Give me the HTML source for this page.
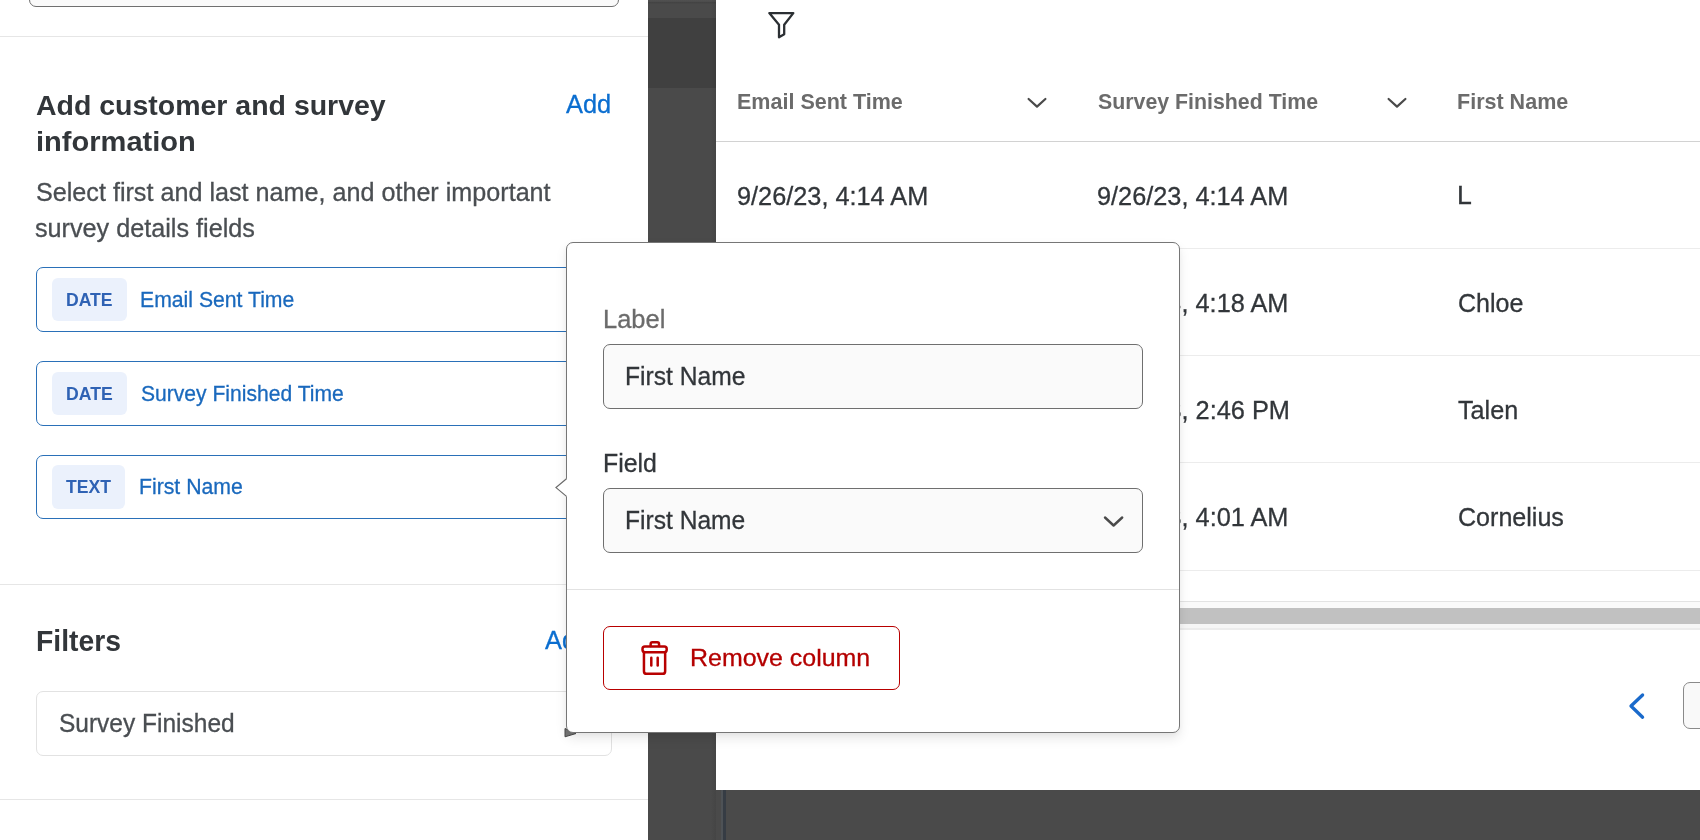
<!DOCTYPE html>
<html>
<head>
<meta charset="utf-8">
<title>Edit column</title>
<style>
  html, body { margin: 0; padding: 0; }
  body {
    width: 1700px; height: 840px; overflow: hidden; position: relative;
    background: #4a4a4a;
    font-family: "Liberation Sans", sans-serif;
    -webkit-font-smoothing: antialiased;
  }
  #wrap { position:absolute; left:0; top:0; width:1700px; height:840px; overflow:hidden; will-change: transform; transform: translateZ(0); }
  .abs { position: absolute; }
  .t { position: absolute; white-space: nowrap; line-height: 1; transform-origin: 0 0; }
/*FIT-START*/
#h1a { left:35.81px; top:90.84px; font-size:28.5px; transform:scaleX(0.9991); }
#h1b { left:36.16px; top:126.89px; font-size:28.5px; transform:scaleX(1.0197); }
#add1 { left:566.31px; top:92.48px; font-size:25px; transform:scaleX(1.0169); }
#p1 { left:36.18px; top:179.62px; font-size:25.3px; transform:scaleX(0.9945); }
#p2 { left:35.09px; top:215.82px; font-size:25.3px; transform:scaleX(0.9960); }
#b1 { left:66.00px; top:291.23px; font-size:18.2px; transform:scaleX(0.9671); }
#b2 { left:65.67px; top:385.20px; font-size:18.2px; transform:scaleX(0.9684); }
#b3 { left:66.23px; top:477.73px; font-size:18.2px; transform:scaleX(0.9666); }
#n1 { left:140.08px; top:289.16px; font-size:22.1px; transform:scaleX(0.9593); }
#n2 { left:141.35px; top:383.41px; font-size:22.1px; transform:scaleX(0.9544); }
#n3 { left:138.61px; top:475.61px; font-size:22.1px; transform:scaleX(0.9606); }
#filt { left:36.47px; top:626.89px; font-size:28.8px; transform:scaleX(0.9832); }
#add2 { left:544.50px; top:628.39px; font-size:25px; transform:scaleX(1.0154); }
#sf { left:58.94px; top:710.54px; font-size:25.6px; transform:scaleX(0.9572); }
#th1 { left:736.89px; top:92.20px; font-size:21.5px; transform:scaleX(1.0008); }
#th2 { left:1097.67px; top:91.68px; font-size:21.5px; transform:scaleX(0.9921); }
#th3 { left:1457.45px; top:91.55px; font-size:21.5px; transform:scaleX(1.0011); }
#r1a { left:737.45px; top:183.84px; font-size:25.6px; transform:scaleX(0.9884); }
#r1b { left:1097.47px; top:183.64px; font-size:25.6px; transform:scaleX(0.9883); }
#r1c { left:1456.54px; top:183.42px; font-size:25.6px; transform:scaleX(1.0417); }
#r2b { left:1097.28px; top:291.05px; font-size:25.6px; transform:scaleX(0.9890); }
#r2c { left:1457.89px; top:290.81px; font-size:25.4px; transform:scaleX(0.9858); }
#r3b { left:1097.36px; top:398.15px; font-size:25.6px; transform:scaleX(0.9900); }
#r3c { left:1458.35px; top:398.23px; font-size:25.4px; transform:scaleX(0.9916); }
#r4b { left:1097.20px; top:505.12px; font-size:25.6px; transform:scaleX(0.9893); }
#r4c { left:1457.65px; top:505.45px; font-size:25.4px; transform:scaleX(0.9869); }
#lab { left:602.54px; top:306.60px; font-size:25.2px; transform:scaleX(1.0112); }
#in1 { left:625.15px; top:363.75px; font-size:25.6px; transform:scaleX(0.9616); }
#fld { left:602.85px; top:451.07px; font-size:25.2px; transform:scaleX(0.9862); }
#in2 { left:625.42px; top:507.51px; font-size:25.6px; transform:scaleX(0.9611); }
#rm { left:690.30px; top:645.77px; font-size:24.1px; transform:scaleX(1.0354); }
/*FIT-END*/

  /* ---------- left panel ---------- */
  #left { left: 0; top: 0; width: 648px; height: 840px; background: #fff; }
  .hr { position: absolute; left: 0; width: 648px; height: 1px; background: #e6e6e6; }
  #topbox { left: 29px; top: -40px; width: 588px; height: 45px; border: 1px solid #707070; border-radius: 7px; background: #fafafa; }

  .h1 { font-weight: bold; color: #32363a; font-size: 26px; }
  .link { color: #0b6ed0; font-size: 24px; }
  .p { color: #4a4e52; font-size: 23.5px; }

  .item { position: absolute; left: 36px; width: 560px; height: 62.5px; border: 1px solid #2a70b8; border-radius: 7px; background: #fff; }
  .badge { position: absolute; left: 15px; top: 9.5px; height: 43.5px; border-radius: 6px; background: #ebf1fc; }
  .td, .p, .f24, .nm, .link, #rm { -webkit-text-stroke: 0.3px currentColor; }
  .bt { font-weight: bold; color: #2f62b4; }
  .nm { color: #1a69bd; }

  #filterbox { left: 36px; top: 691px; width: 574px; height: 63px; border: 1px solid #e2e2e2; border-radius: 7px; background: #fff; }

  /* ---------- dark band ---------- */
  #band { left: 648px; top: 0; width: 68px; height: 840px; background: #4a4a4a; }
  #band2 { left: 648px; top: 18px; width: 68px; height: 70px; background: #404040; }
  #band3 { left: 648px; top: 0; width: 68px; height: 4px; background: linear-gradient(#505050 0, #4e4e4e 35%, #434343 60%, #454545 80%, #4a4a4a 100%); }

  /* ---------- right panel ---------- */
  #right { left: 716px; top: 0; width: 984px; height: 790px; background: #fff; }
  .th { font-weight: bold; color: #6b6b6b; font-size: 20.5px; }
  .td { color: #32363a; font-size: 23.5px; }
  .rl { position: absolute; left: 716px; width: 984px; height: 1px; background: #ececec; }

  /* ---------- popover ---------- */
  #pop { left: 566px; top: 242px; width: 612px; height: 489px; background: #fff; border: 1px solid #767676; border-radius: 7px;
         box-shadow: 0 6px 12px rgba(0,0,0,0.085), 0 2px 5px rgba(0,0,0,0.035); }
  .inp { position: absolute; left: 603px; width: 538px; height: 63px; border: 1px solid #6f6f6f; border-radius: 7px; background: #fafafa; }
  .f24 { font-size: 24.5px; color: #32363a; }
  #btn { left: 603px; top: 626px; width: 295px; height: 62px; border: 1px solid #b80000; border-radius: 7px; background: #fff; }
</style>
</head>
<body>
<div id="wrap">

<!-- LEFT PANEL -->
<div id="left" class="abs"></div>
<div id="topbox" class="abs"></div>
<div class="hr" style="top:36px"></div>
<div class="hr" style="top:584px"></div>
<div class="hr" style="top:799px"></div>

<div class="t h1" id="h1a">Add customer and survey</div>
<div class="t h1" id="h1b">information</div>
<div class="t link" id="add1">Add</div>

<div class="t p" id="p1">Select first and last name, and other important</div>
<div class="t p" id="p2">survey details fields</div>

<div class="item" style="top:267px;"><div class="badge" style="width:75px;"></div></div>
<div class="item" style="top:361px;"><div class="badge" style="width:75px;"></div></div>
<div class="item" style="top:455px; height:62px;"><div class="badge" style="width:73px; top:9.2px;"></div></div>
<div class="t bt" id="b1">DATE</div>
<div class="t bt" id="b2">DATE</div>
<div class="t bt" id="b3">TEXT</div>
<div class="t nm" id="n1">Email Sent Time</div>
<div class="t nm" id="n2">Survey Finished Time</div>
<div class="t nm" id="n3">First Name</div>

<div class="t h1" id="filt">Filters</div>
<div class="t link" id="add2">Add</div>
<div id="filterbox" class="abs"></div>
<div class="t p" id="sf">Survey Finished</div>
<!-- tiny arrow peeking under popover corner -->
<svg class="abs" style="left:560px; top:724px;" width="20" height="16" viewBox="0 0 20 16"><polygon points="5,4.5 16,9.5 5,12.8" fill="#777" stroke="#4a4a4a" stroke-width="1" stroke-linejoin="round"/></svg>

<!-- DARK BAND -->
<div id="band" class="abs"></div>
<div id="band2" class="abs"></div>
<div id="band3" class="abs"></div>
<div class="abs" style="left:711px; top:0; width:5px; height:840px; background:linear-gradient(90deg, rgba(0,0,0,0), rgba(0,0,0,0.07));"></div>

<!-- RIGHT PANEL -->
<div class="abs" style="left:721px; top:790px; width:2px; height:50px; background:#4e5256;"></div>
<div class="abs" style="left:723px; top:790px; width:3px; height:50px; background:#363c44;"></div>
<div id="right" class="abs"></div>
<svg class="abs" style="left:764px; top:8px;" width="36" height="34" viewBox="0 0 36 34">
  <path d="M5.3 5.1 H29.3 L20.2 16.7 V26.2 L15 29.2 V16.7 Z" fill="none" stroke="#2b2f33" stroke-width="2.3" stroke-linejoin="round" stroke-linecap="round"/>
</svg>

<div class="t th" id="th1">Email Sent Time</div>
<div class="t th" id="th2">Survey Finished Time</div>
<div class="t th" id="th3">First Name</div>
<svg class="abs" style="left:1024px; top:94px;" width="26" height="18" viewBox="0 0 26 18"><path d="M4.6 5 L13 12.6 L21.4 5" fill="none" stroke="#4a4a4a" stroke-width="2.2" stroke-linecap="round" stroke-linejoin="round"/></svg>
<svg class="abs" style="left:1383.5px; top:94px;" width="26" height="18" viewBox="0 0 26 18"><path d="M4.6 5 L13 12.6 L21.4 5" fill="none" stroke="#4a4a4a" stroke-width="2.2" stroke-linecap="round" stroke-linejoin="round"/></svg>

<div class="rl" style="top:141px; background:#d2d2d2;"></div>
<div class="rl" style="top:248px;"></div>
<div class="rl" style="top:355px;"></div>
<div class="rl" style="top:462px;"></div>
<div class="rl" style="top:570px;"></div>

<div class="t td" id="r1a">9/26/23, 4:14 AM</div>
<div class="t td" id="r1b">9/26/23, 4:14 AM</div>
<div class="t td" id="r1c">L</div>

<div class="t td" id="r2b">9/26/23, 4:18 AM</div>
<div class="t td" id="r2c">Chloe</div>

<div class="t td" id="r3b">9/26/23, 2:46 PM</div>
<div class="t td" id="r3c">Talen</div>

<div class="t td" id="r4b">9/26/23, 4:01 AM</div>
<div class="t td" id="r4c">Cornelius</div>

<!-- scrollbar -->
<div class="abs" style="left:716px; top:601px; width:984px; height:29px; background:#f6f6f6;"></div>
<div class="abs" style="left:716px; top:601px; width:984px; height:1px; background:#e3e3e3;"></div>
<div class="abs" style="left:716px; top:602px; width:984px; height:6px; background:#fafafa;"></div>
<div class="abs" style="left:716px; top:608px; width:984px; height:16px; background:#c1c1c1;"></div>
<div class="abs" style="left:716px; top:628px; width:984px; height:2px; background:#ececec;"></div>

<!-- pagination -->
<svg class="abs" style="left:1622px; top:688px;" width="30" height="36" viewBox="0 0 30 36"><path d="M20.6 7 L9 18 L20.6 29.2" fill="none" stroke="#1a6acb" stroke-width="3.3" stroke-linecap="round" stroke-linejoin="round"/></svg>
<div class="abs" style="left:1683px; top:682px; width:40px; height:45px; border:1px solid #8a8a8a; border-radius:7px; background:#f9f9f9;"></div>

<!-- POPOVER -->
<div id="pop" class="abs"></div>
<!-- arrow -->
<svg class="abs" style="left:552px; top:474px;" width="18" height="28" viewBox="0 0 18 28">
  <path d="M15.2 4.3 L4 13.6 L15.2 22.9 Z" fill="#fff" stroke="none"/>
  <path d="M14.5 4.8 L4 13.6 L14.5 22.4" fill="none" stroke="#6a6a6a" stroke-width="1.2"/>
</svg>

<div class="t f24" id="lab" style="color:#6b6b6b;">Label</div>
<div class="inp" style="top:344px;"></div>
<div class="t f24" id="in1">First Name</div>

<div class="t f24" id="fld">Field</div>
<div class="inp" style="top:488px;"></div>
<div class="t f24" id="in2">First Name</div>
<svg class="abs" style="left:1100px; top:512px;" width="28" height="20" viewBox="0 0 28 20"><path d="M5 5.5 L13.6 13.5 L22.2 5.5" fill="none" stroke="#4a4a4a" stroke-width="2.4" stroke-linecap="round" stroke-linejoin="round"/></svg>

<div class="abs" style="left:567px; top:589px; width:612px; height:1px; background:#e2e2e2;"></div>

<div id="btn" class="abs"></div>
<svg class="abs" style="left:636px; top:636px;" width="38" height="44" viewBox="0 0 38 44">
  <g fill="none" stroke="#b80000" stroke-width="2.5" stroke-linecap="round" stroke-linejoin="round">
    <path d="M14.65 10 V8 Q14.65 6.25 16.4 6.25 H21.3 Q23.05 6.25 23.05 8 V10"/>
    <rect x="6.5" y="10.5" width="24.2" height="5.7" rx="2.4"/>
    <path d="M7.95 16.4 V35.2 Q7.95 37.85 10.6 37.85 H26.5 Q29.15 37.85 29.15 35.2 V16.4"/>
    <path d="M15.3 21.8 V29.6"/>
    <path d="M21.7 21.8 V29.6"/>
  </g>
</svg>
<div class="t" id="rm" style="color:#b40000;">Remove column</div>

</div>
</body>
</html>
